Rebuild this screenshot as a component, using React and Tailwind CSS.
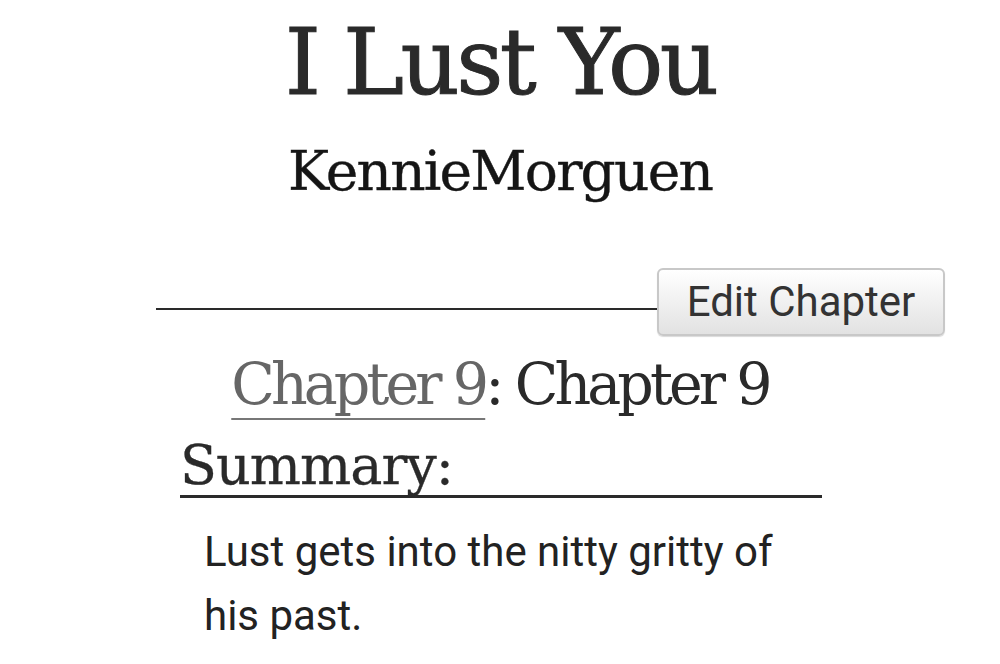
export default function App() {
  const serif = { fontFamily: '"DejaVu Serif", "Liberation Serif", serif' };
  const sans = { fontFamily: 'Roboto, "Liberation Sans", sans-serif' };
  return (
    <div className="w-[1000px] h-[664px] overflow-hidden bg-white text-[#2a2a2a]">
      <div className="flex flex-col">
        <h2
          className="text-center text-[92px] leading-none font-normal mt-[17px] tracking-[-3.6px] [-webkit-text-stroke:1px_#2a2a2a]"
          style={serif}
        >
          I Lust You
        </h2>
        <h3
          className="text-center text-[55px] leading-none font-normal mt-[35px] text-[#151515] tracking-[-1.8px] [-webkit-text-stroke:0.4px_#151515]"
          style={serif}
        >
          KennieMorguen
        </h3>

        <div className="flex items-start ml-[156px] w-[789px] mt-[69px]">
          <div className="flex-1 border-b-2 border-[#2a2a2a] mt-[40px]"></div>
          <button
            className="w-[288px] h-[68px] rounded-[6px] border-2 border-[#c8c8c8] bg-gradient-to-b from-white to-[#e2e2e2] text-[42px] leading-none text-[#333] shadow-[0_1px_1px_rgba(0,0,0,0.15)]"
            style={sans}
          >
            Edit Chapter
          </button>
        </div>

        <h3
          className="text-center text-[57px] leading-none font-normal mt-[20px] tracking-[-3.9px]"
          style={serif}
        >
          <a className="text-[#666] underline decoration-[#777] decoration-2 underline-offset-[14px]">
            Chapter 9
          </a>
          : Chapter 9
        </h3>

        <div className="ml-[180px] w-[642px] mt-[26px]">
          <h3
            className="text-[54px] leading-none font-normal border-b-[3px] border-[#2a2a2a] pb-[2px] tracking-[-1px] [-webkit-text-stroke:0.3px_#2a2a2a]"
            style={serif}
          >
            Summary:
          </h3>
          <p
            className="ml-[24px] mt-[22px] text-[42px] leading-[64px] text-[#222]"
            style={sans}
          >
            Lust gets into the nitty gritty of his past.
          </p>
        </div>
      </div>
    </div>
  );
}
